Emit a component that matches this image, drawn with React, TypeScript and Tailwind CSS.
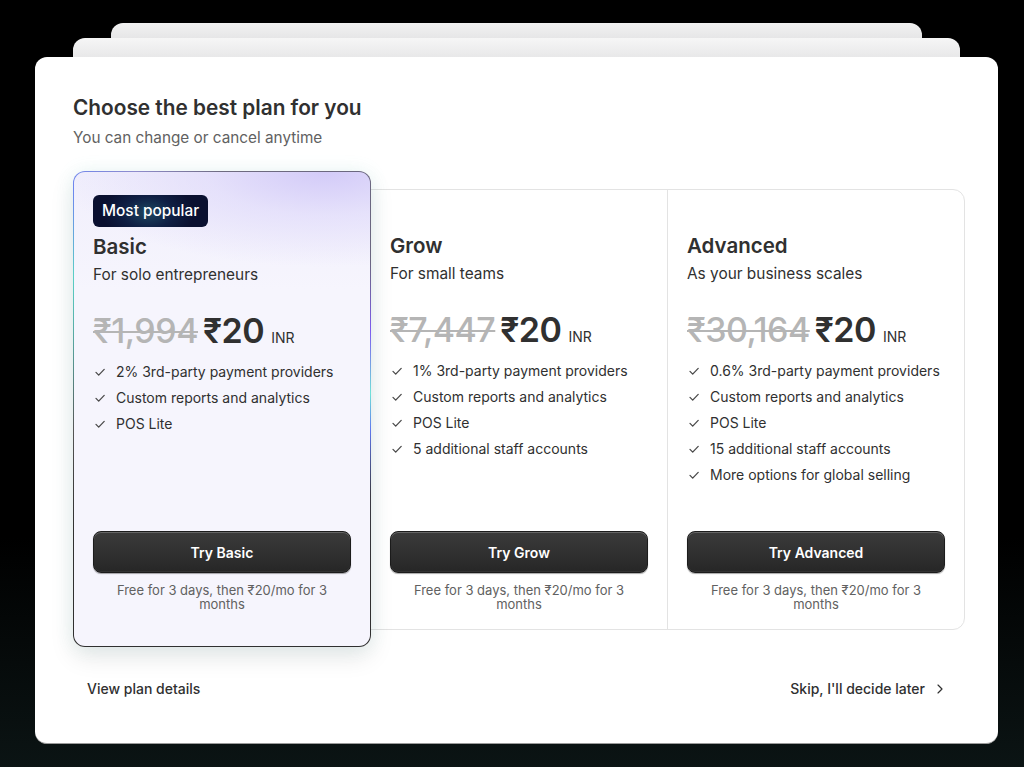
import { ChevronRight } from "lucide-react";

type Plan = {
  name: string;
  tagline: string;
  was: string;
  features: string[];
  cta: string;
};

const plans: Plan[] = [
  {
    name: "Basic",
    tagline: "For solo entrepreneurs",
    was: "₹1,994",
    features: ["2% 3rd-party payment providers", "Custom reports and analytics", "POS Lite"],
    cta: "Try Basic",
  },
  {
    name: "Grow",
    tagline: "For small teams",
    was: "₹7,447",
    features: [
      "1% 3rd-party payment providers",
      "Custom reports and analytics",
      "POS Lite",
      "5 additional staff accounts",
    ],
    cta: "Try Grow",
  },
  {
    name: "Advanced",
    tagline: "As your business scales",
    was: "₹30,164",
    features: [
      "0.6% 3rd-party payment providers",
      "Custom reports and analytics",
      "POS Lite",
      "15 additional staff accounts",
      "More options for global selling",
    ],
    cta: "Try Advanced",
  },
];

const Check = () => (
  <svg width="14" height="14" viewBox="0 0 14 14" fill="none" className="shrink-0">
    <path d="M3 7.4l2.7 2.7L11.2 4.4" stroke="#4a4a4a" strokeWidth="1.3" strokeLinecap="round" strokeLinejoin="round" />
  </svg>
);

const PlanBody = ({ plan }: { plan: Plan }) => (
  <>
    <h3 className="text-[20.5px] font-semibold leading-7 text-[#303030]">{plan.name}</h3>
    <p className="mt-1 text-[15.4px] leading-5 text-[#303030]">{plan.tagline}</p>
    <div className="mt-[26px] flex h-10 items-baseline leading-10">
      <span className="text-[34px] font-medium tracking-[-0.5px] text-[#b5b5b5] line-through decoration-[1.5px]">
        {plan.was}
      </span>
      <span className="ml-[5px] text-[34px] font-semibold tracking-[-0.5px] text-[#303030]">₹20</span>
      <span className="ml-[7px] text-[14px] text-[#303030]">INR</span>
    </div>
    <ul className="mt-[11px] flex flex-col gap-[6px]">
      {plan.features.map((f) => (
        <li key={f} className="flex items-center gap-[9px] text-[14px] leading-5 text-[#303030]">
          <Check />
          {f}
        </li>
      ))}
    </ul>
    <div className="mt-auto">
      <button className="h-[42px] w-full rounded-lg border border-[#1c1c1c] bg-[linear-gradient(180deg,#3b3b3b_0%,#2f2f2f_60%,#262626_100%)] text-[14px] font-semibold text-white shadow-[inset_0_1px_0_rgba(255,255,255,0.22),inset_0_-1px_0_rgba(255,255,255,0.06),0_1px_1px_rgba(0,0,0,0.35)]">
        {plan.cta}
      </button>
      <p className="mt-[10px] px-[12px] text-center text-[13px] leading-[14px] text-[#616161]">
        Free for 3 days, then ₹20/mo for 3 months
      </p>
    </div>
  </>
);

export default function App() {
  const [basic, grow, advanced] = plans;

  return (
    <div
      className="min-h-screen w-full bg-[linear-gradient(180deg,#000_0%,#000_70%,#0b1414_100%)] pt-[23px]"
      style={{ fontFamily: "Inter, 'Noto Sans', 'Liberation Sans', sans-serif" }}
    >
      <div className="ml-[35px] w-[963px]">
        <div className="mx-auto h-[15px] w-[811px] rounded-t-xl bg-[linear-gradient(180deg,#f2f2f2,#e6e6e7)]" />
        <div className="mx-auto h-[19px] w-[887px] rounded-t-xl bg-[linear-gradient(180deg,#f6f6f6,#e8e8e9)]" />

        <div className="rounded-xl border-b border-[#9a9a9a] bg-white pb-[44px] pl-[38px] pr-[33px] pt-[37px]">
          <h1 className="text-[20.8px] font-semibold leading-7 text-[#303030]">Choose the best plan for you</h1>
          <p className="mt-[6px] text-[15.3px] leading-5 text-[#616161]">You can change or cancel anytime</p>

          <div className="mt-[41px] flex h-[441px] rounded-xl border border-[#e3e3e3]">
            <div className="relative z-10 -mb-[18px] -ml-px -mt-[19px] w-[298px] shrink-0 rounded-xl bg-[conic-gradient(from_0deg,#6e6b80_0deg,#6a6680_45deg,#7d5cf0_62deg,#6fe2d8_84deg,#5f78ee_98deg,#3a3a44_120deg,#303030_140deg,#303030_230deg,#555_262deg,#59cfc6_312deg,#6d86ef_326deg,#8f8ccc_340deg,#6e6b80_360deg)] p-px shadow-[0_10px_24px_rgba(0,0,0,0.1),0_0_18px_rgba(110,226,216,0.12)]">
              <div className="flex h-full flex-col rounded-[11px] bg-[radial-gradient(ellipse_90%_20%_at_85%_0%,#d3cbf8_0%,rgba(221,215,250,0.6)_45%,rgba(246,245,253,0)_100%),linear-gradient(180deg,#f1effc_0%,#f6f5fd_25%,#f6f5fd_100%)] px-[19px] pb-[35px] pt-[23px]">
                <div className="mb-[6px] w-fit rounded-md bg-[radial-gradient(ellipse_40%_90%_at_48%_55%,#1d4660_0%,#0f1f44_55%,#0a1030_100%)] px-[9px] py-[5px] text-[15.4px] font-medium leading-[22px] text-white">
                  Most popular
                </div>
                <PlanBody plan={basic} />
              </div>
            </div>

            <div className="flex flex-1 flex-col px-[19px] pb-[18px] pt-[42px]">
              <PlanBody plan={grow} />
            </div>
            <div className="flex flex-1 flex-col border-l border-[#e3e3e3] px-[19px] pb-[18px] pt-[42px]">
              <PlanBody plan={advanced} />
            </div>
          </div>

          <div className="mt-[49px] flex items-center justify-between pl-[14px] pr-[17px] text-[14px] font-medium leading-5 text-[#303030]">
            <span>View plan details</span>
            <span className="flex items-center gap-[7px]">
              Skip, I'll decide later
              <ChevronRight size={16} strokeWidth={1.75} />
            </span>
          </div>
        </div>
      </div>
    </div>
  );
}
